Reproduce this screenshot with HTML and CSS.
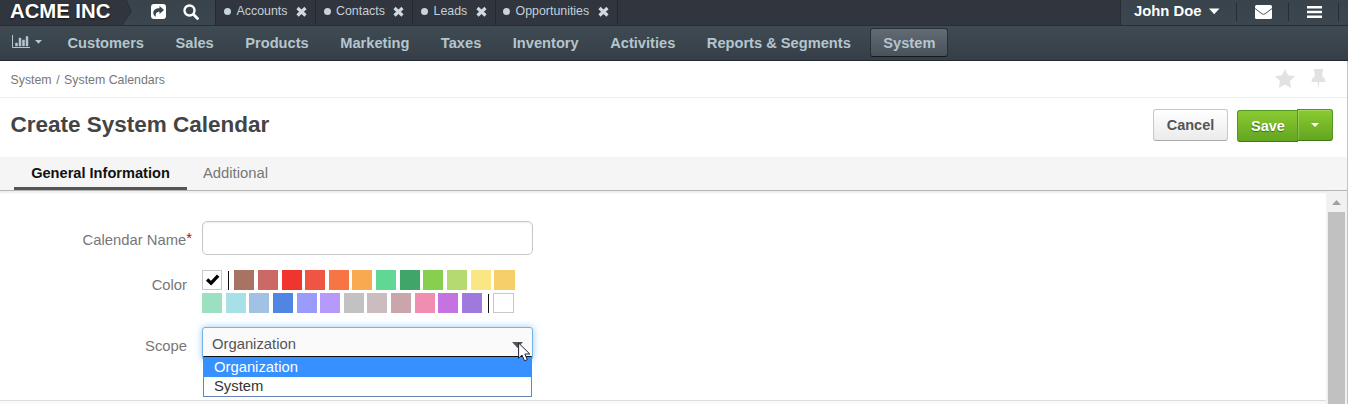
FILE: index.html
```html
<!DOCTYPE html>
<html lang="en">
<head>
<meta charset="utf-8">
<title>Create System Calendar</title>
<link rel="stylesheet" href="styles.css">
</head>
<body>
<header class="topbar">
  <div class="logo">ACME INC</div>
  <svg class="logo-arrow" width="10" height="25" viewBox="0 0 10 25"><path d="M0 0H4L9.500 11.500L0 25Z" fill="#31353d"/><path d="M4 0L9.500 11.500L0 25" fill="none" stroke="#2b3037"/></svg>
  <div class="quick">
    <svg width="15" height="15" viewBox="0 0 15 15"><path fill="#fff" fill-rule="evenodd" d="M3 0H12Q15 0 15 3V12Q15 15 12 15H3Q0 15 0 12V3Q0 0 3 0ZM8.500 2V4.200C4.500 4.200 2.300 6.200 2.300 8.800C2.300 10.600 3.200 12 5 12.800C4.200 10 5 7.700 8.500 7.700V10L13 6Z"/></svg>
    <svg width="16" height="16" viewBox="0 0 16 16"><circle cx="6.500" cy="6.500" r="5" fill="none" stroke="#fff" stroke-width="2.400"/><path d="M10.300 10.300L14.500 14.500" stroke="#fff" stroke-width="2.800" stroke-linecap="round"/></svg>
  </div>
  <div class="tabs">
    <div class="pin pin-a"><i></i><span>Accounts</span><svg class="x" viewBox="0 0 11 11"><path d="M1.500 2L9.500 9.500M9.500 2L1.500 9.500"/></svg></div>
    <div class="pin pin-b"><i></i><span>Contacts</span><svg class="x" viewBox="0 0 11 11"><path d="M1.500 2L9.500 9.500M9.500 2L1.500 9.500"/></svg></div>
    <div class="pin pin-c"><i></i><span>Leads</span><svg class="x" viewBox="0 0 11 11"><path d="M1.500 2L9.500 9.500M9.500 2L1.500 9.500"/></svg></div>
    <div class="pin pin-d"><i></i><span>Opportunities</span><svg class="x" viewBox="0 0 11 11"><path d="M1.500 2L9.500 9.500M9.500 2L1.500 9.500"/></svg></div>
  </div>
  <div class="user">
    <div class="user-name"><span>John Doe</span><svg width="11" height="7" viewBox="0 0 11 7"><path d="M0 .5H10.500L5.200 6.200Z" fill="#fff"/></svg></div>
    <div class="user-cell mail"><svg width="17" height="14" viewBox="0 0 17 14"><rect width="17" height="14" rx="1.500" fill="#fff"/><path d="M0 3.500L7 8.800Q8.500 9.800 10 8.800L17 3.500" fill="none" stroke="#4a565f" stroke-width="1"/></svg></div>
    <div class="user-cell burger"><svg width="15" height="12" viewBox="0 0 15 12"><path d="M0 0H15V2.500H0ZM0 4.700H15V7.200H0ZM0 9.400H15V12H0Z" fill="#fff"/></svg></div>
  </div>
</header>
<nav class="mainnav">
  <div class="chart"><svg width="18" height="14" viewBox="0 0 18 14"><path d="M.5 0V12.500H18" fill="none" stroke="#b5c5ce"/><path d="M3.500 8H5.500V11H3.500ZM7 3H9V11H7ZM10.500 5H12.500V11H10.500ZM14 1.500H16V11H14Z" fill="#b5c5ce" stroke="#b5c5ce" stroke-width=".5"/></svg><svg width="8" height="4" viewBox="0 0 8 4"><path d="M0 0H7L3.500 3.700Z" fill="#b5c5ce"/></svg></div>
  <span>Customers</span><span>Sales</span><span>Products</span><span>Marketing</span><span>Taxes</span><span>Inventory</span><span>Activities</span><span>Reports &amp; Segments</span><span class="active">System</span>
</nav>
<div class="page">
  <div class="crumbs">
    <div class="trail"><span>System</span><span>/</span><span>System Calendars</span></div>
    <div class="marks">
      <svg width="20" height="19" viewBox="0 0 20 19"><path d="M10 0L13 6.300L20 7.200L15 12L16.200 19L10 15.600L3.800 19L5 12L0 7.200L7 6.300Z" fill="#e2e2e2"/></svg>
      <svg width="15" height="20" viewBox="0 0 15 20"><path d="M3 0H12Q13 1.500 11.500 2.500L11.200 7.500Q14.500 9.300 14.500 13H8.300L7.500 20L6.500 13H.5Q.5 9.300 3.700 7.500L3.500 2.500Q2 1.500 3 0Z" fill="#e2e2e2"/></svg>
    </div>
  </div>
  <div class="titlebar">
    <h1>Create System Calendar</h1>
    <div class="actions">
      <button class="cancel">Cancel</button>
      <div class="save-group"><button class="save">Save</button><button class="more"><svg width="8" height="4" viewBox="0 0 8 4"><path d="M0 0H8L4 4Z" fill="#fff"/></svg></button></div>
    </div>
  </div>
  <div class="sections"><span class="current">General Information</span><span>Additional</span></div>
  <div class="content">
    <form class="form">
      <div class="row name-row"><label>Calendar Name<em>*</em></label><input class="text" type="text" aria-label="Calendar Name"></div>
      <div class="row color-row"><label>Color</label>
        <div class="palette">
          <b class="box"><svg width="15" height="13" viewBox="0 0 15 13"><path d="M2.100 5.500L6.100 9.200L13.200 1.700" fill="none" stroke="#000" stroke-width="3.300"/></svg></b><u class="sep-a"></u><b class="c1"></b><b class="c2"></b><b class="c3"></b><b class="c4"></b><b class="c5"></b><b class="c6"></b><b class="c7"></b><b class="c8"></b><b class="c9"></b><b class="c10"></b><b class="c11"></b><b class="c12"></b>
        </div>
        <div class="palette second">
          <b class="c13"></b><b class="c14"></b><b class="c15"></b><b class="c16"></b><b class="c17"></b><b class="c18"></b><b class="c19"></b><b class="c20"></b><b class="c21"></b><b class="c22"></b><b class="c23"></b><b class="c24"></b><u class="sep-b"></u><b class="box blank"></b>
        </div>
      </div>
      <div class="row scope-row"><label>Scope</label>
        <div class="select"><span>Organization</span><svg class="caret" width="11" height="6" viewBox="0 0 11 6"><path d="M0 0H11L5.500 6Z" fill="#555"/></svg>
          <div class="menu"><div class="chosen">Organization</div><div>System</div></div>
          <svg class="cursor" width="13" height="20" viewBox="0 0 13 20"><path d="M.6 1V16.200L4 13L6.500 18.800L9.300 17.600L6.800 12H11.800Z" fill="#fff" stroke="#223" stroke-width="1"/></svg>
        </div>
      </div>
      <div class="foot"></div>
    </form>
    <div class="scroll"><svg width="9" height="5" viewBox="0 0 9 5"><path d="M0 5L4.500 0L9 5Z" fill="#a0a0a0"/></svg><div class="thumb"></div></div>
  </div>
</div>
</body>
</html>
```
FILE: styles.css
```css
* { box-sizing: border-box; }
body { margin: 0; width: 1348px; height: 404px; overflow: hidden; background: #fff; font-family: "Liberation Sans", Arial, sans-serif; }
svg { display: block; flex: none; }
.topbar { height: 26px; display: flex; background: linear-gradient(#38434b, #3c464e); border-bottom: 1px solid #262d33; }
.logo { width: 122px; padding-left: 10px; background: #31353d; color: #fff; font-weight: bold; font-size: 20.3px; line-height: 22px; text-shadow: 0 1px 2px #111; white-space: nowrap; }
.quick { width: 83px; display: flex; gap: 17px; padding: 4px 0 0 19px; }
.tabs { flex: 1; display: flex; background: #31353d; border-left: 1px solid #262a30; }
.pin { display: flex; align-items: center; padding: 0 0 3px 8px; border-right: 1px solid #25292f; color: #c4d0d8; font-size: 12.4px; white-space: nowrap; }
.pin i { width: 7px; height: 7px; border-radius: 50%; background: #c8d3da; margin-right: 5.500px; }
.pin span { flex: 1; }
.x { width: 11px; height: 11px; margin-right: 8px; }
.x path { stroke: #cfd9df; stroke-width: 3.2; }
.pin-a { width: 100px; }
.pin-b { width: 97px; padding-left: 7.500px; }
.pin-c { width: 83px; }
.pin-d { width: 122px; padding-left: 7px; }
.user { width: 228px; display: flex; border-left: 1px solid #262d33; color: #fff; }
.user-name { width: 115px; display: flex; align-items: center; gap: 8px; padding: 0 0 3px 13px; font-weight: bold; font-size: 14.8px; white-space: nowrap; }
.user-cell { margin: 3px 0 4px; border-left: 1px solid #252c32; display: flex; }
.mail { width: 52px; padding: 2px 0 0 18px; }
.burger { width: 51px; padding: 3px 0 0 18px; border-right: 1px solid #252c32; }
.mainnav { height: 35px; display: flex; align-items: center; gap: 31.5px; padding: 0 0 2px 12px; background: linear-gradient(#3f4a52, #363f47); border-bottom: 1px solid #222a31; color: #b5c5ce; font-weight: bold; font-size: 14.65px; line-height: 17px; white-space: nowrap; }
.mainnav span { padding-top: 2px; }
.chart { display: flex; gap: 5px; align-items: center; width: 31px; margin-right: -7px; }
.mainnav .active { height: 29px; margin-left: -12px; padding: 6px 12px 4px; border: 1px solid #283037; border-bottom-color: #14191e; border-radius: 3px; background: linear-gradient(#626b75, #495159); }
.page { height: 343px; border-right: 1px solid #c4c4c4; }
.crumbs { height: 37px; display: flex; justify-content: space-between; padding: 0 21px 0 10.500px; border-bottom: 1px solid #eee; color: #777; font-size: 12.35px; }
.trail { display: flex; gap: 4.500px; line-height: 38px; }
.marks { display: flex; gap: 16px; padding-top: 8px; }
.titlebar { height: 59px; display: flex; justify-content: space-between; padding-right: 14px; }
h1 { margin: 0; padding: 13px 0 0 10.500px; color: #444; font-size: 22.5px; line-height: 28px; }
.actions { display: flex; gap: 9px; padding-top: 11px; }
button { font: bold 14.5px "Liberation Sans", Arial, sans-serif; padding: 0 0 1px; }
.cancel { width: 75px; height: 32px; color: #555; border: 1px solid #c8c8c8; border-bottom-color: #aaa; border-radius: 3px; background: linear-gradient(#fff, #ebebeb); }
.save-group { display: flex; }
.save { width: 61px; height: 32px; margin-top: 1px; color: #fff; border: 1px solid #529623; border-right: 0; border-bottom-color: #3c7815; border-radius: 3px 0 0 3px; background: linear-gradient(#8aca31, #62a621); text-shadow: 0 1px 1px #386c13; }
.more { width: 36px; margin-left: -1px; height: 32px; display: flex; align-items: center; justify-content: center; border: 1px solid #529623; border-bottom-color: #3c7815; border-radius: 0 3px 3px 0; background: linear-gradient(#8aca31, #62a621); box-shadow: inset 1px 1px 0 rgba(255, 255, 255, .2); }
.sections { height: 34px; display: flex; padding-left: 14px; background: #f5f5f5; border-bottom: 1px solid #b5b5b5; color: #777; font-size: 14.8px; line-height: 32px; }
.sections .current { width: 173px; margin-right: 16px; height: 33px; text-align: center; color: #111; font-weight: bold; font-size: 14.6px; border-bottom: 3px solid #555; }
.content { height: 213px; display: flex; box-shadow: inset 0 3px 2px -1px #eee; }
.form { width: 1326px; padding-top: 30px; color: #777; font-size: 14.8px; }
.row { display: grid; grid-template-columns: 187px 331px; column-gap: 15px; }
label { text-align: right; line-height: 18px; white-space: nowrap; }
em { color: #c00020; font-style: normal; margin-right: -5px; position: relative; top: -2px; }
.name-row { height: 49px; }
.name-row label { padding-top: 10px; }
.text { width: 331px; height: 34px; border: 1px solid #c8c8c8; border-radius: 5px; background: #fff; box-shadow: inset 0 1px 2px #eee; }
.color-row { height: 57px; grid-template-rows: 20px 20px; row-gap: 3px; }
.color-row label { padding-top: 6px; }
.palette { display: flex; gap: 3.64px; }
.second { grid-column: 2; }
.palette b { width: 20px; height: 20px; flex: none; }
.palette .box { border: 1px solid #c8c8c8; padding: 3px 0 0 2px; }
.palette .blank { width: 21px; }
.palette u { width: 1px; height: 19px; background: #111; flex: none; margin-top: 1px; }
.palette .sep-a { margin: 1px 1px 0 2.500px; }
.palette .sep-b { margin: 1px 1px 0 2.100px; }
.palette .c1 { width: 20.500px; background: #a87362; }
.c2 { background: #cb6966; } .c3 { background: #f0352f; } .c4 { background: #f05544; } .c5 { background: #f77544; } .c6 { background: #f9aa50; }
.c7 { background: #60d794; } .c8 { background: #3fa568; } .c9 { background: #87d04f; } .c10 { background: #b6da72; } .c11 { background: #fae784; }
.palette .c12 { width: 21px; background: #f6cf6a; }
.c13 { background: #9be1c1; } .c14 { background: #a7e0e7; } .c15 { background: #a1c2e5; } .c16 { background: #5085e3; } .c17 { background: #9a9bfa; } .c18 { background: #b59afb; }
.c19 { background: #c2c2c2; } .c20 { background: #cabcbf; } .c21 { background: #caa5ab; } .c22 { background: #f08db1; } .c23 { background: #c673e2; } .c24 { background: #a079dd; }
.scope-row { height: 73px; }
.scope-row label { padding-top: 10px; }
.select { position: relative; height: 33px; display: flex; justify-content: space-between; padding: 0 9px; border: 1px solid #73b3ec; border-radius: 3px; background: #fafafa; color: #555; line-height: 32px; box-shadow: 0 0 7px rgba(82, 168, 236, .6); }
.caret { margin-top: 14px; }
.menu { position: absolute; left: 0; top: 28px; width: 329px; height: 41px; border: 1px solid #6684b8; border-top: 1px solid #111; background: #fff; color: #333; line-height: 18px; }
.menu div { height: 19px; padding-left: 10px; }
.menu .chosen { height: 20px; background: #3790ff; color: #fff; line-height: 20px; }
.cursor { position: absolute; left: 315px; top: 14px; }
.foot { height: 4px; background: #f9f9f9; border-top: 1px solid #ddd; }
.scroll { width: 21px; padding: 9px 0 0 2px; background: #f1f1f1; }
.scroll svg { margin-left: 4px; }
.thumb { width: 17px; height: 200px; margin-top: 7px; background: #c1c1c1; }
```
